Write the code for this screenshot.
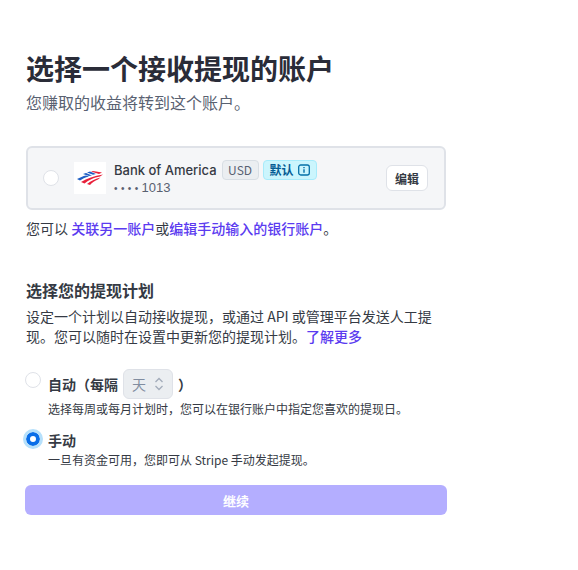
<script>
	let plan = 'manual';
</script>

<main class="page">
	<h1>选择一个接收提现的账户</h1>
	<p class="sub">您赚取的收益将转到这个账户。</p>

	<div class="account">
		<span class="radio"></span>
		<span class="logo">
			<svg width="26" height="14" viewBox="0 0 26 14">
				<path d="M0 8 C3 6.5 6 5 9 4.5 L12 5.5 C8 6.5 5 8 3 9.5 Z" fill="#1f5fc4" />
				<path d="M6 3 L9 2 L15 4.5 L12 5 Z" fill="#1f5fc4" />
				<path d="M10 1.5 L13 .5 L19 3 L16 3.8 Z" fill="#1f5fc4" />
				<path d="M4 11 C10 7.5 17 5 26 3.5 L23 5.5 C17 6.5 11 9.5 7.5 12.5 Z" fill="#e8203a" />
				<path d="M10 13 C14 10 19 7.5 23.5 6.5 L21 8.5 C18 9.5 15 11.5 13 14 Z" fill="#e8203a" />
				<path d="M14 .5 L16 0 L25 1.5 L22 3 Z" fill="#e8203a" />
			</svg>
		</span>
		<div class="details">
			<div class="name-row">
				<span class="bank">Bank of America</span>
				<span class="badge">USD</span>
				<span class="badge default">
					默认
					<svg width="12" height="12" viewBox="0 0 12 12">
						<rect x=".7" y="1" width="10.6" height="10" rx="2" fill="none" stroke="#0570a8" stroke-width="1.3" />
						<path d="M6 3v1.3M6 5.3v3.4" stroke="#0570a8" stroke-width="1.4" />
					</svg>
				</span>
			</div>
			<div class="number"><span class="dots">••••</span>1013</div>
		</div>
		<button class="edit">编辑</button>
	</div>

	<p class="hint">您可以 <a href="#a">关联另一账户</a>或<a href="#b">编辑手动输入的银行账户</a>。</p>

	<h2>选择您的提现计划</h2>
	<p class="desc">设定一个计划以自动接收提现，或通过 API 或管理平台发送人工提现。您可以随时在设置中更新您的提现计划。<a class="more" href="#c">了解更多</a></p>

	<div class="option auto">
		<span class="radio" class:checked={plan === 'auto'}></span>
		<div>
			<div class="opt-title">
				自动（每隔
				<span class="select">天
					<svg width="10" height="14" viewBox="0 0 10 14">
						<path d="M1.5 5 L5 1.5 L8.5 5 M1.5 9 L5 12.5 L8.5 9" fill="none" stroke="#a3acba" stroke-width="1.3" />
					</svg>
				</span>
				）
			</div>
			<div class="opt-desc">选择每周或每月计划时，您可以在银行账户中指定您喜欢的提现日。</div>
		</div>
	</div>

	<div class="option manual">
		<span class="radio" class:checked={plan === 'manual'}></span>
		<div>
			<div class="opt-title">手动</div>
			<div class="opt-desc">一旦有资金可用，您即可从 Stripe 手动发起提现。</div>
		</div>
	</div>

	<button class="continue">继续</button>
</main>

<style>
	:global(body) {
		background: #fff;
	}

	.page {
		width: 422px;
		padding: 48px 0 0 25px;
		font-family: "Noto Sans CJK SC", "Inter", sans-serif;
		color: #353a44;
		font-size: 14px;
		line-height: 20px;
	}

	h1 {
		margin: 0 0 0 1px;
		font-size: 28px;
		line-height: 40px;
		font-weight: 700;
		color: #2a2c38;
	}

	.sub {
		margin: 4px 0 0 1px;
		font-size: 16px;
		line-height: 20px;
		color: #596171;
	}

	.account {
		display: flex;
		align-items: center;
		height: 64px;
		margin: 34px 1px 0 1px;
		padding: 0 16px 0 15px;
		box-sizing: border-box;
		background: #f5f6f8;
		border: 2px solid #dfe2e8;
		border-radius: 6px;
	}

	.radio {
		flex: none;
		width: 14px;
		height: 14px;
		background: #fff;
		border: 1px solid #dfe2e8;
		border-radius: 50%;
	}

	.logo {
		display: flex;
		align-items: center;
		justify-content: center;
		flex: none;
		width: 32px;
		height: 32px;
		margin-left: 15px;
		background: #fff;
	}

	.details {
		flex: 1;
		margin-left: 8px;
	}

	.name-row {
		display: flex;
		align-items: center;
		gap: 4px;
		height: 20px;
	}

	.bank {
		font-family: "Inter", sans-serif;
		font-size: 13px;
		font-weight: 500;
		margin-right: 1px;
	}

	.badge {
		display: inline-flex;
		align-items: center;
		gap: 4px;
		box-sizing: border-box;
		height: 20px;
		padding: 0 5.5px;
		font-size: 12px;
		color: #596171;
		background: #ebeef1;
		border: 1px solid #d8dee4;
		border-radius: 4px;
	}

	.default {
		padding: 0 6px;
		font-weight: 700;
		color: #045b94;
		background: #cbf5fd;
		border-color: #a8ebfb;
	}

	.number {
		font-family: "Liberation Sans", sans-serif;
		font-size: 13px;
		line-height: 16px;
		color: #596171;
	}

	.dots {
		font-size: 10px;
		letter-spacing: 3.4px;
	}

	.edit {
		width: 42px;
		height: 26px;
		padding: 0;
		font: 700 12px "Noto Sans CJK SC", sans-serif;
		color: #353a44;
		background: #fff;
		border: 1px solid #dfe2e8;
		border-radius: 6px;
	}

	.hint {
		margin: 8px 0 0 1px;
	}

	a {
		font-weight: 500;
		color: #5b3bf0;
		text-decoration: none;
	}

	h2 {
		margin: 40px 0 0 1px;
		font-size: 16px;
		line-height: 24px;
		font-weight: 700;
	}

	.desc {
		margin: 4px 0 0 1px;
		width: 410px;
	}

	.option {
		display: flex;
		gap: 7px;
	}

	.auto {
		margin-top: 23px;
	}

	.auto .radio {
		margin-top: 3px;
	}

	.manual {
		margin-top: 11px;
	}

	.manual .radio {
		margin-top: 2px;
	}

	.radio.checked {
		width: 6px;
		height: 6px;
		background: #fff;
		border: 4px solid #0a6ee8;
		outline: 3px solid #b6e0fb;
		margin-left: 1px;
		margin-right: 1px;
	}

	.opt-title {
		display: flex;
		align-items: center;
		gap: 5px;
		font-size: 14px;
		font-weight: 700;
	}

	.auto .opt-title {
		height: 30px;
	}

	.select {
		display: inline-flex;
		align-items: center;
		justify-content: space-between;
		box-sizing: border-box;
		width: 50px;
		height: 30px;
		padding: 0 8px;
		font-size: 14px;
		font-weight: 400;
		color: #818da0;
		background: #ebeef1;
		border: 1px solid #dfe2e8;
		border-radius: 6px;
	}

	.opt-desc {
		font-size: 12px;
		line-height: 20px;
	}

	.continue {
		display: block;
		width: 422px;
		height: 30px;
		margin-top: 15px;
		padding: 0;
		font: 700 13px "Noto Sans CJK SC", sans-serif;
		color: #fff;
		background: #b4aeff;
		border: none;
		border-radius: 6px;
	}
</style>
